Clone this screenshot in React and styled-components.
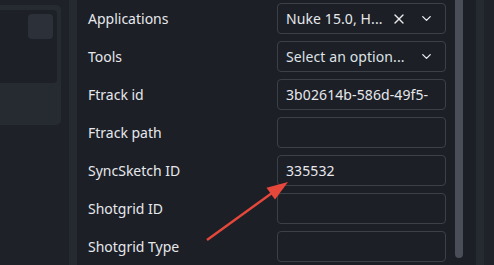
import React from "react";
import styled, { createGlobalStyle } from "styled-components";
import { X, ChevronDown } from "lucide-react";

const GlobalStyle = createGlobalStyle`
  html, body {
    margin: 0;
    padding: 0;
    background: #1c1f26;
  }
  body {
    font-family: "Noto Sans", "Open Sans", sans-serif;
  }
`;

const rows = [
  { label: "Applications", kind: "multi", value: "Nuke 15.0, H..." },
  { label: "Tools", kind: "select", value: "Select an option..." },
  { label: "Ftrack id", kind: "text", value: "3b02614b-586d-49f5-" },
  { label: "Ftrack path", kind: "text", value: "" },
  { label: "SyncSketch ID", kind: "text", value: "335532" },
  { label: "Shotgrid ID", kind: "text", value: "" },
  { label: "Shotgrid Type", kind: "text", value: "" },
];

const App = () => {
  return (
    <>
      <GlobalStyle />
      <Page>
        <Sidebar>
          <Card>
            <Preview>
              <ThumbButton />
            </Preview>
          </Card>
        </Sidebar>
        <Splitter />
        <Main>
          <Form>
            {rows.map((row) => (
              <React.Fragment key={row.label}>
                <Label>{row.label}</Label>
                <Field>
                  <FieldText $placeholder={row.kind === "select"}>
                    {row.value}
                  </FieldText>
                  {row.kind === "multi" && (
                    <IconSlot>
                      <X size={16} strokeWidth={2} />
                    </IconSlot>
                  )}
                  {row.kind !== "text" && (
                    <IconSlot>
                      <ChevronDown size={15} strokeWidth={2.2} />
                    </IconSlot>
                  )}
                </Field>
              </React.Fragment>
            ))}
          </Form>
          <Scrollbar />
        </Main>
        <Splitter />
        <EdgePanel />
        <Arrow width="494" height="265" viewBox="0 0 494 265">
          <line
            x1="207"
            y1="240"
            x2="272"
            y2="193"
            stroke="#e5473b"
            strokeWidth="2.4"
          />
          <polygon points="288,182 266.5,187.8 275,199.6" fill="#e5473b" />
        </Arrow>
      </Page>
    </>
  );
};

export default App;

const Page = styled.div`
  position: relative;
  display: flex;
  width: 494px;
  height: 265px;
  overflow: hidden;
  background: #1c1f26;
`;

const Sidebar = styled.div`
  width: 69px;
  flex-shrink: 0;
  padding-top: 5px;
  box-sizing: border-box;
  background: #1e2128;
`;

const Card = styled.div`
  width: 61px;
  height: 120px;
  padding: 5px 4px 0 0;
  box-sizing: border-box;
  background: #262a31;
  border-radius: 0 5px 5px 0;
`;

const Preview = styled.div`
  display: flex;
  justify-content: flex-end;
  align-items: flex-start;
  height: 73px;
  padding: 4px;
  box-sizing: border-box;
  background: #1d2027;
  border-radius: 0 4px 4px 0;
`;

const ThumbButton = styled.div`
  width: 25px;
  height: 25px;
  border-radius: 4px;
  background: #2c3038;
`;

const Splitter = styled.div`
  width: 8px;
  flex-shrink: 0;
  background: #252930;
`;

const Main = styled.div`
  display: flex;
  width: 399px;
  flex-shrink: 0;
  padding: 0 13px 0 11px;
  box-sizing: border-box;
`;

const Form = styled.div`
  display: grid;
  grid-template-columns: 189px 169px;
  grid-auto-rows: 31px;
  row-gap: 7px;
  padding-top: 3px;
  align-content: start;
`;

const Label = styled.div`
  display: flex;
  align-items: center;
  font-size: 14px;
  color: #e6e8ec;
  white-space: nowrap;
`;

const Field = styled.div`
  display: flex;
  align-items: center;
  gap: 5px;
  padding: 0 8px 0 8px;
  box-sizing: border-box;
  border: 1px solid #3c4049;
  border-radius: 4px;
  overflow: hidden;
  color: #e6e8ec;
`;

const FieldText = styled.span`
  flex: 1;
  min-width: 0;
  font-size: 14px;
  letter-spacing: 0.1px;
  white-space: nowrap;
  overflow: hidden;
  color: ${(p) => (p.$placeholder ? "#dfe2e7" : "#e6e8ec")};
`;

const IconSlot = styled.span`
  display: flex;
  align-items: center;
  justify-content: center;
  width: 22px;
  color: #e6e8ec;
`;

const Scrollbar = styled.div`
  width: 8px;
  height: 258px;
  margin-left: 9px;
  flex-shrink: 0;
  background: #4a4e59;
  border-radius: 0 0 4px 4px;
`;

const EdgePanel = styled.div`
  flex: 1;
  background: #1f2228;
`;

const Arrow = styled.svg`
  position: absolute;
  left: 0;
  top: 0;
  pointer-events: none;
`;
